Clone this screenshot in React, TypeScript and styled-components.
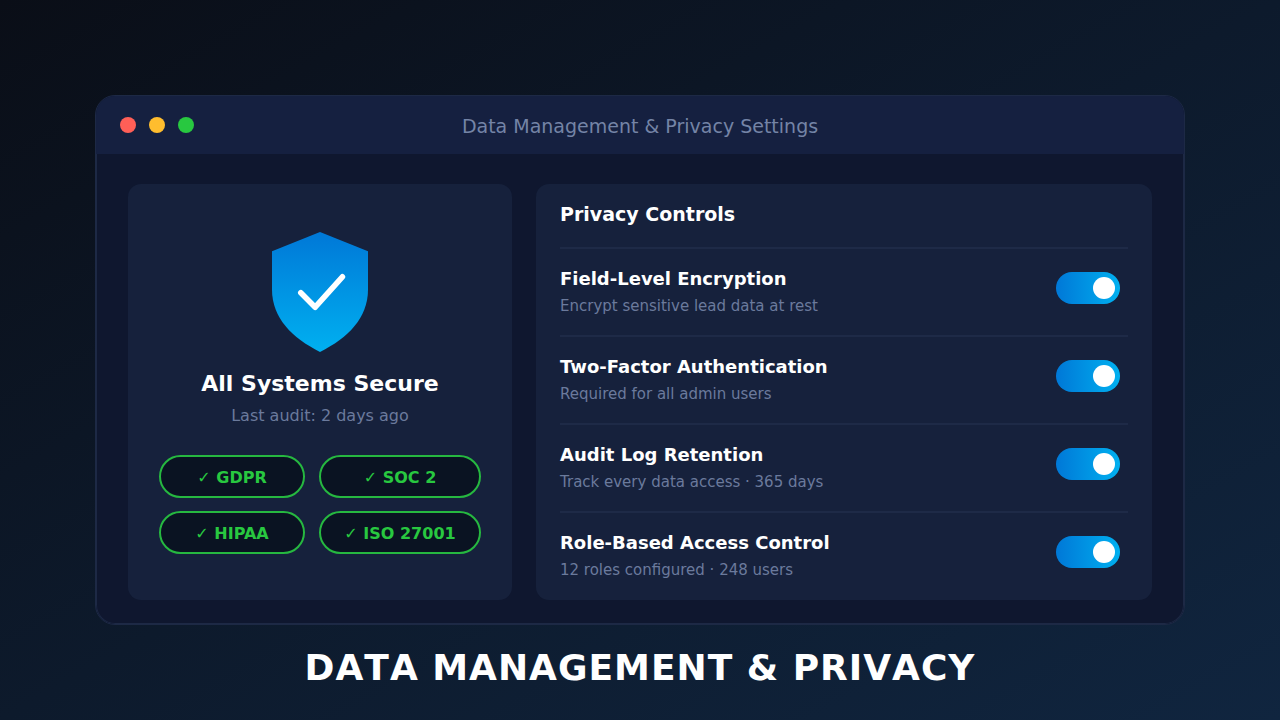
import React, { useState } from "react";
import styled, { createGlobalStyle } from "styled-components";

const GlobalStyle = createGlobalStyle`
  *, *::before, *::after { box-sizing: border-box; }
  body {
    margin: 0;
    font-family: "DejaVu Sans", Verdana, sans-serif;
    color: #ffffff;
  }
  h1, h2, h3, p, ul { margin: 0; padding: 0; }
`;

const Page = styled.main`
  min-height: 100vh;
  padding: 95px 95px 28px;
  display: flex;
  flex-direction: column;
  background: linear-gradient(to bottom right, #0a0e17, #0d1a2c, #10253f);
`;

const Window = styled.section`
  border: 1px solid #1d2945;
  border-radius: 20px;
  overflow: hidden;
  background: #0f172f;
`;

const TitleBar = styled.header`
  display: grid;
  grid-template-columns: 1fr auto 1fr;
  align-items: center;
  height: 58px;
  padding: 0 24px;
  background: #152040;
`;

const Dots = styled.div`
  display: flex;
  gap: 13px;
`;

const Dot = styled.span<{ $color: string }>`
  width: 16px;
  height: 16px;
  border-radius: 50%;
  background: ${(p) => p.$color};
`;

const WindowTitle = styled.h2`
  padding-top: 2px;
  font-size: 19px;
  line-height: 24px;
  font-weight: 400;
  color: #7484a6;
`;

const Content = styled.div`
  display: grid;
  grid-template-columns: minmax(0, 48fr) minmax(0, 77fr);
  gap: 24px;
  padding: 30px 31px 23px;
  border: 1px solid #1d2945;
  border-top: 0;
  border-radius: 0 0 19px 19px;
`;

const Card = styled.section`
  min-height: 416px;
  border-radius: 13px;
  background: #16213c;
`;

const StatusCard = styled(Card)`
  display: flex;
  flex-direction: column;
  align-items: center;
  padding: 48px 31px 45px;
`;

const ControlsCard = styled(Card)`
  padding: 0 24px;
`;

const StatusTitle = styled.h3`
  margin-top: 16px;
  font-size: 22px;
  line-height: 32px;
  font-weight: 700;
`;

const StatusNote = styled.p`
  margin-top: 4px;
  font-size: 16px;
  line-height: 24px;
  color: #6b7a9c;
`;

const Badges = styled.ul`
  align-self: stretch;
  display: grid;
  grid-template-columns: 146fr 162fr;
  gap: 13px 14px;
  margin-top: 27px;
  list-style: none;
`;

const Badge = styled.li`
  height: 43px;
  padding-top: 9px;
  border: 2px solid #26b840;
  border-radius: 22px;
  background: #0a1322;
  font-size: 16px;
  line-height: 24px;
  font-weight: 700;
  text-align: center;
  color: #28c840;
`;

const ControlsTitle = styled.h3`
  height: 63px;
  padding-top: 18px;
  font-size: 19px;
  line-height: 24px;
  font-weight: 700;
`;

const Row = styled.label`
  display: flex;
  align-items: flex-start;
  justify-content: space-between;
  padding: 18px 8px 19px 0;
  border-top: 2px solid #1e2a47;
`;

const RowText = styled.span`
  display: flex;
  flex-direction: column;
  gap: 5px;
`;

const RowName = styled.span`
  font-size: 18px;
  line-height: 24px;
  font-weight: 700;
`;

const RowNote = styled.span`
  font-size: 15px;
  line-height: 20px;
  color: #6b7a9c;
`;

const Switch = styled.input`
  appearance: none;
  flex: none;
  display: flex;
  align-items: center;
  justify-content: flex-start;
  width: 64px;
  height: 32px;
  margin: 5px 0 0;
  padding: 0 5px;
  border-radius: 16px;
  background: #2a3653;
  cursor: pointer;

  &::before {
    content: "";
    width: 22px;
    height: 22px;
    border-radius: 50%;
    background: #ffffff;
  }

  &:checked {
    justify-content: flex-end;
    background: linear-gradient(to right, #0078d7, #00b0f0);
  }
`;

const Caption = styled.h1`
  margin-top: 19px;
  font-size: 36px;
  line-height: 48px;
  font-weight: 700;
  font-kerning: none;
  letter-spacing: 1px;
  text-align: center;
`;

const certifications = ["GDPR", "SOC 2", "HIPAA", "ISO 27001"];

const controls = [
  { name: "Field-Level Encryption", note: "Encrypt sensitive lead data at rest" },
  { name: "Two-Factor Authentication", note: "Required for all admin users" },
  { name: "Audit Log Retention", note: "Track every data access · 365 days" },
  { name: "Role-Based Access Control", note: "12 roles configured · 248 users" },
];

function Shield() {
  return (
    <svg width="96" height="120" viewBox="0 0 96 120" aria-hidden="true">
      <defs>
        <linearGradient id="shield" x1="0" y1="0" x2="0" y2="1">
          <stop offset="0" stopColor="#0078d7" />
          <stop offset="1" stopColor="#00b0f0" />
        </linearGradient>
      </defs>
      <path
        d="M48 0 L96 19.2 V57.6 C96 86 76 106 48 120 C20 106 0 86 0 57.6 V19.2 Z"
        fill="url(#shield)"
      />
      <path
        d="M28.8 60.8 L43.2 75.2 L70.4 44.8"
        fill="none"
        stroke="#ffffff"
        strokeWidth="5.6"
        strokeLinecap="round"
        strokeLinejoin="round"
      />
    </svg>
  );
}

function Control({ name, note }: { name: string; note: string }) {
  const [on, setOn] = useState(true);
  return (
    <Row>
      <RowText>
        <RowName>{name}</RowName>
        <RowNote>{note}</RowNote>
      </RowText>
      <Switch type="checkbox" role="switch" checked={on} onChange={() => setOn(!on)} />
    </Row>
  );
}

export default function App() {
  return (
    <>
      <GlobalStyle />
      <Page>
        <Window>
          <TitleBar>
            <Dots>
              <Dot $color="#ff5f57" />
              <Dot $color="#ffbd2e" />
              <Dot $color="#28c840" />
            </Dots>
            <WindowTitle>Data Management &amp; Privacy Settings</WindowTitle>
          </TitleBar>
          <Content>
            <StatusCard>
              <Shield />
              <StatusTitle>All Systems Secure</StatusTitle>
              <StatusNote>Last audit: 2 days ago</StatusNote>
              <Badges>
                {certifications.map((c) => (
                  <Badge key={c}>✓ {c}</Badge>
                ))}
              </Badges>
            </StatusCard>
            <ControlsCard>
              <ControlsTitle>Privacy Controls</ControlsTitle>
              {controls.map((c) => (
                <Control key={c.name} {...c} />
              ))}
            </ControlsCard>
          </Content>
        </Window>
        <Caption>DATA MANAGEMENT &amp; PRIVACY</Caption>
      </Page>
    </>
  );
}
